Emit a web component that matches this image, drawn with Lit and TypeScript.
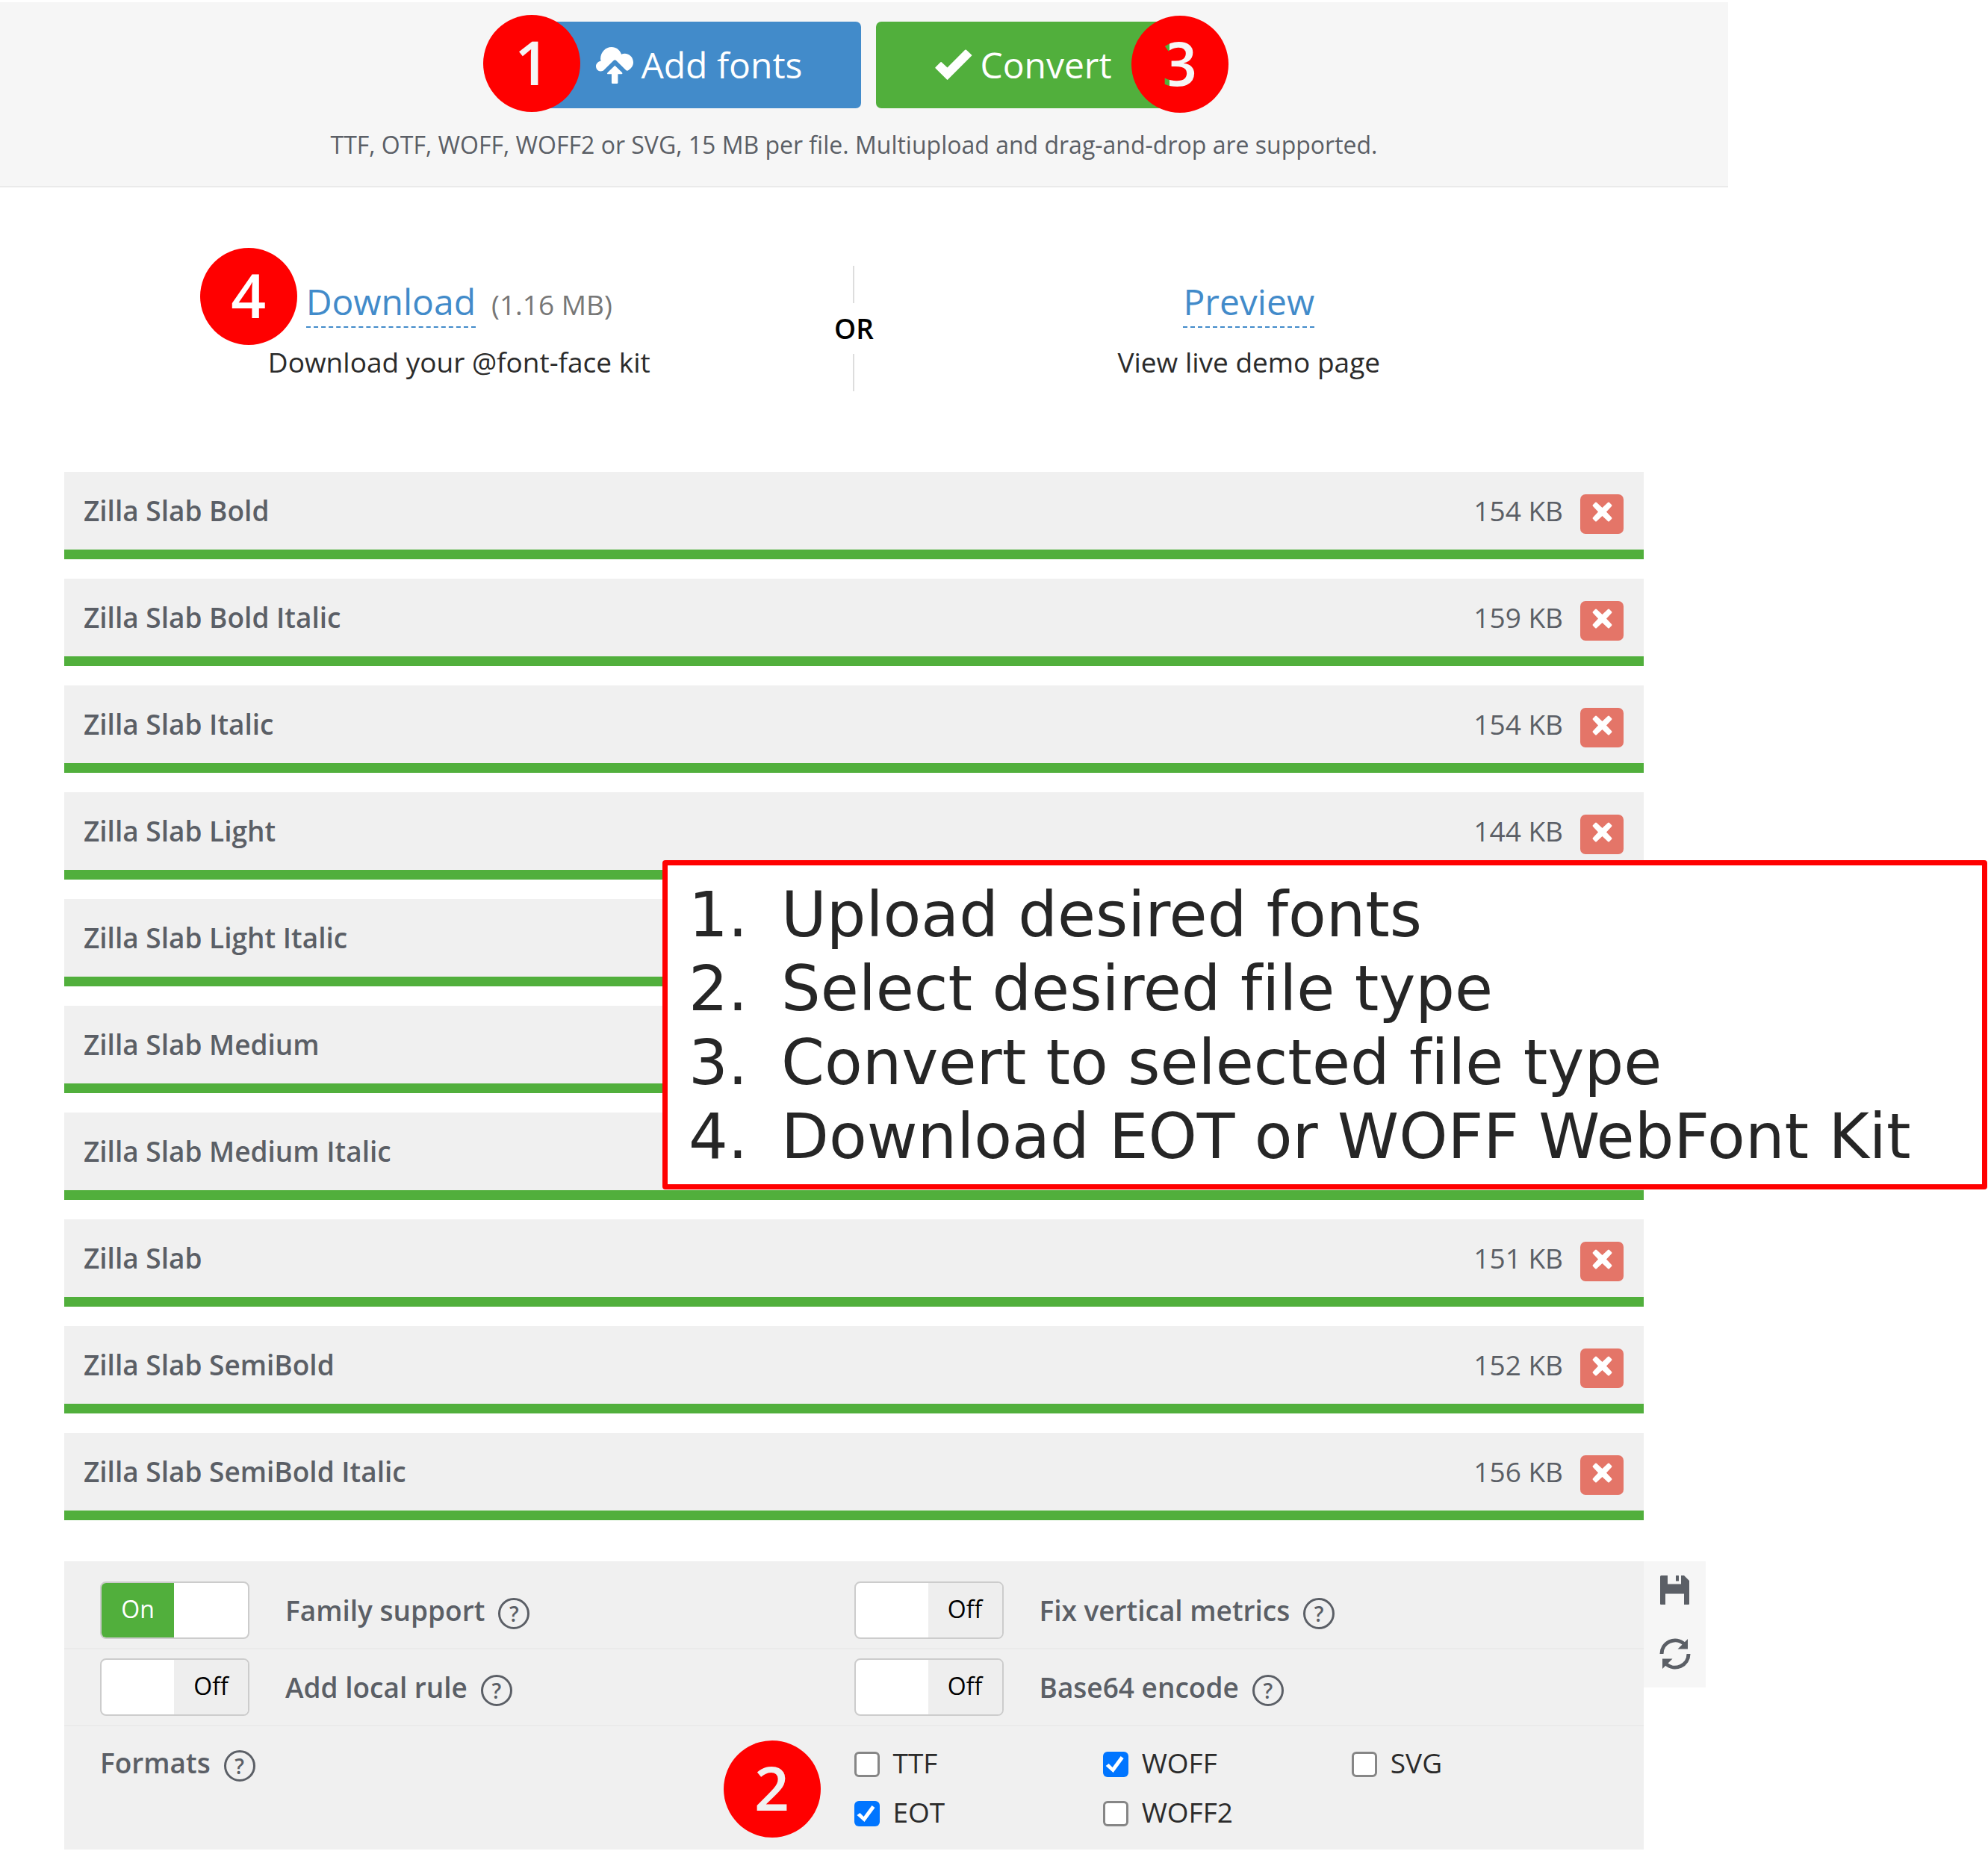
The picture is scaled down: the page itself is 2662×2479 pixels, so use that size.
import { LitElement, html, css, svg } from "lit";
import { customElement, property } from "lit/decorators.js";
import { classMap } from "lit/directives/class-map.js";

interface FontFile {
  name: string;
  size: string;
}

interface FormatChoice {
  name: string;
  checked: boolean;
}

const FILES: FontFile[] = [
  { name: "Zilla Slab Bold", size: "154 KB" },
  { name: "Zilla Slab Bold Italic", size: "159 KB" },
  { name: "Zilla Slab Italic", size: "154 KB" },
  { name: "Zilla Slab Light", size: "144 KB" },
  { name: "Zilla Slab Light Italic", size: "" },
  { name: "Zilla Slab Medium", size: "" },
  { name: "Zilla Slab Medium Italic", size: "" },
  { name: "Zilla Slab", size: "151 KB" },
  { name: "Zilla Slab SemiBold", size: "152 KB" },
  { name: "Zilla Slab SemiBold Italic", size: "156 KB" },
];

const FORMATS: FormatChoice[] = [
  { name: "TTF", checked: false },
  { name: "WOFF", checked: true },
  { name: "SVG", checked: false },
  { name: "EOT", checked: true },
  { name: "WOFF2", checked: false },
];

const STEPS = [
  "Upload desired fonts",
  "Select desired file type",
  "Convert to selected file type",
  "Download EOT or WOFF WebFont Kit",
];

const uploadIcon = html`<svg width="50" height="49" viewBox="0 0 148 145" fill="currentColor" aria-hidden="true">
  ${svg`<path d="M31 92 70 53Q75 49 80 53L119 92Q124 96 129 92C140 85 148 75 148 61 148 41 133 26 114 26 109 26 105 27 101 29 94 10 80 0 62 0 38 0 19 20 18 45 18 50 19 52 20 55 8 58 0 66 0 76 0 87 8 96 19 96 24 96 28 95 31 92Z"/>
  <path d="M75 73 104 101Q107 107 102 107H87V141Q87 145 83 145H66Q62 145 62 141V107H46Q42 105 46 101Z"/>`}
</svg>`;

const checkIcon = html`<svg width="50" height="42" viewBox="0 0 148 124" fill="currentColor" aria-hidden="true">
  ${svg`<path d="M2 71 22 51Q24 49 26 51L49 72 119 2Q122 0 124 2L145 22Q147 24 145 26L51 120Q49 122 47 120L2 75Q0 73 2 71Z"/>`}
</svg>`;

const crossIcon = html`<svg width="27" height="27" viewBox="0 0 27 27" fill="currentColor" aria-hidden="true">
  ${svg`<path d="M6 1 13.500 8 21 1Q22 0 23 1L26 4Q27 5 26 6L19 13.500 26 21Q27 22 26 23L23 26Q22 27 21 26L13.500 19 6 26Q5 27 4 26L1 23Q0 22 1 21L8 13.500 1 6Q0 5 1 4L4 1Q5 0 6 1Z"/>`}
</svg>`;

const saveIcon = html`<svg width="42" height="42" viewBox="0 0 42 42" fill="currentColor" aria-hidden="true">
  ${svg`<path d="M2.500 1H11V12.500H29V1H33L40 8V39Q40 40 39 40H33V25.500H8V40H2Q1 40 1 39V2.500Q1 1 2.500 1Z"/>
  <rect x="22" y="1" width="4" height="7.500" rx=".5"/>`}
</svg>`;

const refreshIcon = html`<svg width="42" height="42" viewBox="0 0 42 42" aria-hidden="true">
  ${svg`<g fill="none" stroke="currentColor" stroke-width="5">
    <path d="M3 21A18 18 0 0 1 33 7.500"/>
    <path d="M39 21A18 18 0 0 1 9 34.500"/>
  </g>
  <path fill="currentColor" d="M38 1V14.500H24.500ZM4 41V27.500H17.500Z"/>`}
</svg>`;

@customElement("step-badge")
export class StepBadge extends LitElement {
  static styles = css`
    :host {
      position: absolute;
      z-index: 1;
      display: flex;
      align-items: center;
      justify-content: center;
      box-sizing: border-box;
      width: 130px;
      height: 130px;
      padding-bottom: 6px;
      border-radius: 50%;
      background: #f00;
      color: #f5f5f5;
      font: 600 82px/82px "Open Sans", sans-serif;
      pointer-events: none;
    }
  `;

  render() {
    return html`<slot></slot>`;
  }
}

@customElement("toggle-option")
export class ToggleOption extends LitElement {
  @property() label = "";
  @property({ type: Boolean }) on = false;

  static styles = css`
    :host {
      display: flex;
      align-items: center;
      gap: 18px;
    }
    .option {
      position: relative;
      display: flex;
      align-items: center;
      gap: 48px;
      cursor: pointer;
    }
    .input {
      position: absolute;
      opacity: 0;
      margin: 0;
      width: 200px;
      height: 77px;
    }
    .track {
      display: grid;
      grid-template-columns: 97px 1fr;
      box-sizing: border-box;
      width: 200px;
      height: 77px;
      border: 2px solid #ccc;
      border-radius: 8px;
      overflow: hidden;
      background: #fff;
      font-size: 32px;
      line-height: 70px;
      text-align: center;
    }
    .on {
      background: #51af3c;
      color: #fff;
    }
    .off {
      grid-column: 2;
      background: #eee;
      color: #000;
    }
    .text {
      font-weight: 600;
      line-height: 50px;
    }
  `;

  render() {
    return html`
      <label class="option">
        <input class="input" type="checkbox" role="switch" .checked=${this.on}
          @change=${(e: Event) => (this.on = (e.target as HTMLInputElement).checked)} />
        <span class="track">
          <span class=${classMap({ on: this.on, off: !this.on })}>${this.on ? "On" : "Off"}</span>
        </span>
        <span class="text">${this.label}</span>
      </label>
      <help-button topic=${this.label}></help-button>
    `;
  }
}

@customElement("help-button")
export class HelpButton extends LitElement {
  @property() topic = "";

  static styles = css`
    :host {
      display: block;
      padding-top: 8px;
    }
    .help {
      display: block;
      box-sizing: border-box;
      width: 42px;
      height: 42px;
      padding: 0;
      border: 3px solid #5b5f66;
      border-radius: 50%;
      background: none;
      color: #5b5f66;
      font: 600 28px/36px "Open Sans", sans-serif;
      text-align: center;
      cursor: pointer;
    }
  `;

  render() {
    return html`<button class="help" type="button" aria-label=${`Help: ${this.topic}`}>?</button>`;
  }
}

@customElement("app-root")
export class AppRoot extends LitElement {
  static styles = css`
    :host {
      display: block;
      overflow: hidden;
      background: #fff;
      color: #2b2b2b;
      font: 37px/50px "Open Sans", sans-serif;
    }
    .sheet {
      margin-right: 348px;
      padding-top: 3px;
    }

    /* Upload bar */
    .bar {
      display: flex;
      flex-direction: column;
      align-items: center;
      gap: 27px;
      padding: 26px 27px 33px 0;
      border-bottom: 2px solid #eaeaea;
      background: #f6f6f6;
    }
    .actions {
      display: flex;
      gap: 20px;
    }
    .action {
      position: relative;
    }
    .button {
      display: flex;
      align-items: center;
      gap: 10px;
      padding: 25px 79px;
      border: 0;
      border-radius: 7px;
      color: #fff;
      font: 48px/66px "Open Sans", sans-serif;
      cursor: pointer;
    }
    .upload {
      background: #428bca;
    }
    .convert {
      background: #51af3c;
    }
    .hint {
      margin: 0;
      color: #5b5f66;
      font-size: 32px;
      line-height: 44px;
    }

    /* Circled step numbers */
    .badge-upload {
      left: -72px;
      top: -9px;
    }
    .badge-convert {
      right: -77px;
      top: -8px;
    }
    .badge-download {
      left: -142px;
      top: -39px;
      color: #fff;
    }
    .badge-formats {
      left: -175px;
      top: -5px;
      color: #f0f0f0;
    }
    /* The digit shows what lies behind the badge: the button's edge, then the bar */
    .see-through {
      background: linear-gradient(to right, #51af3c 10px, #f6f6f6 10px);
      background-clip: text;
      color: transparent;
    }

    .content {
      margin: 105px 113px 0 86px;
    }

    /* Download or preview */
    .results {
      display: grid;
      grid-template-columns: 1fr 1fr;
    }
    .result {
      grid-row: 1;
      grid-column: 1;
      display: flex;
      flex-direction: column;
      align-items: center;
      gap: 21px;
      padding-top: 15px;
    }
    .preview {
      grid-column: 2;
    }
    .result-head {
      position: relative;
      display: flex;
      align-items: baseline;
      gap: 21px;
    }
    .link {
      border-bottom: 2px dashed #428bca;
      color: #428bca;
      font-size: 48px;
      line-height: 66px;
      text-decoration: none;
    }
    .weight {
      color: #777;
    }
    .note {
      margin: 0;
    }
    .divider {
      grid-area: 1 / 1 / 2 / 3;
      justify-self: center;
      display: flex;
      flex-direction: column;
      align-items: center;
      gap: 9px;
      color: #000;
      font-weight: 600;
    }
    .divider::before,
    .divider::after {
      content: "";
      width: 2px;
      height: 50px;
      background: #ddd;
    }

    /* Uploaded files */
    .files {
      position: relative;
      margin-top: 108px;
    }
    .list {
      display: grid;
      gap: 26px;
      margin: 0;
      padding: 0;
      list-style: none;
    }
    .file {
      display: flex;
      align-items: flex-start;
      gap: 23px;
      padding: 27px 27px 21px 26px;
      border-bottom: 13px solid #51af3c;
      background: #f0f0f0;
      color: #5b5f66;
    }
    .name {
      flex: 1;
      font-weight: 600;
    }
    .remove {
      display: flex;
      justify-content: center;
      width: 58px;
      height: 53px;
      margin-top: 3px;
      padding: 10px 0 0;
      border: 0;
      border-radius: 7px;
      background: #e47568;
      color: #fff;
      cursor: pointer;
    }

    /* Instructions laid over the list */
    .callout {
      position: absolute;
      top: 520px;
      left: 801px;
      right: -460px;
      z-index: 2;
      margin: 0;
      padding: 17px 28px 14px;
      border: 7px solid #f00;
      border-radius: 4px;
      background: #fff;
      color: #262626;
      font: 83px/99px "DejaVu Sans", sans-serif;
      font-variant-ligatures: none;
      list-style: none;
    }
    .step {
      display: grid;
      grid-template-columns: 124px 1fr;
      white-space: nowrap;
    }

    /* Conversion settings */
    .settings {
      display: grid;
      grid-template-columns: 1fr 83px;
      align-items: start;
      margin: 55px -83px 0 0;
      color: #5b5f66;
    }
    .panel {
      background: #f0f0f0;
    }
    .options {
      display: grid;
      grid-template-columns: 1fr 1fr;
      padding: 12px 0;
      border-bottom: 2px solid #eaeaea;
    }
    .options:first-child {
      padding-top: 27px;
    }
    .left {
      padding-left: 48px;
    }
    .formats {
      display: grid;
      grid-template-columns: 1fr 1fr;
      align-items: start;
      padding: 24px 0 25px;
    }
    .formats-title {
      display: flex;
      align-items: center;
      gap: 18px;
      font-weight: 600;
    }
    .choices {
      position: relative;
      display: grid;
      grid-template-columns: repeat(3, 1fr);
      row-gap: 16px;
      padding-right: 58px;
      color: #2b2b2b;
    }
    .choice {
      display: flex;
      align-items: center;
      gap: 18px;
      cursor: pointer;
    }
    .box {
      appearance: none;
      box-sizing: border-box;
      width: 34px;
      height: 34px;
      margin: 4px 0 0;
      border: 3px solid #868686;
      border-radius: 6px;
      background: #fff;
    }
    .box:checked {
      border: 0;
      background: #0075ff;
    }
    .box:checked::before {
      content: "";
      display: block;
      height: 34px;
      background: #fff;
      clip-path: polygon(4px 19px, 8px 16px, 13px 21px, 24px 6px, 28px 9px, 14px 28px);
    }
    .tools {
      display: flex;
      flex-direction: column;
      align-items: center;
      gap: 43px;
      padding: 18px 0 24px;
      background: #f6f6f6;
    }
    .tool {
      display: flex;
      padding: 0;
      border: 0;
      background: none;
      color: #5b5f66;
      cursor: pointer;
    }
  `;

  private renderFile(file: FontFile) {
    return html`
      <li class="file">
        <span class="name">${file.name}</span>
        <span>${file.size}</span>
        <button class="remove" type="button" aria-label=${`Remove ${file.name}`}>${crossIcon}</button>
      </li>
    `;
  }

  render() {
    return html`
      <div class="sheet">
        <header class="bar">
          <div class="actions">
            <div class="action">
              <button class="button upload" type="button">${uploadIcon}Add fonts</button>
              <step-badge class="badge-upload">1</step-badge>
            </div>
            <div class="action">
              <button class="button convert" type="button">${checkIcon}Convert</button>
              <step-badge class="badge-convert"><span class="see-through">3</span></step-badge>
            </div>
          </div>
          <p class="hint">
            TTF, OTF, WOFF, WOFF2 or SVG, 15 MB per file. Multiupload and drag-and-drop are supported.
          </p>
        </header>

        <main class="content">
          <section class="results">
            <div class="result">
              <div class="result-head">
                <step-badge class="badge-download">4</step-badge>
                <a class="link" href="#download">Download</a>
                <span class="weight">(1.16 MB)</span>
              </div>
              <p class="note">Download your @font-face kit</p>
            </div>
            <div class="divider">OR</div>
            <div class="result preview">
              <div class="result-head"><a class="link" href="#preview">Preview</a></div>
              <p class="note">View live demo page</p>
            </div>
          </section>

          <section class="files">
            <ul class="list">
              ${FILES.map((file) => this.renderFile(file))}
            </ul>
            <ol class="callout">
              ${STEPS.map((step, i) => html`<li class="step"><span>${i + 1}.</span><span>${step}</span></li>`)}
            </ol>
          </section>

          <section class="settings">
            <div class="panel">
              <div class="options">
                <toggle-option class="left" label="Family support" on></toggle-option>
                <toggle-option label="Fix vertical metrics"></toggle-option>
              </div>
              <div class="options">
                <toggle-option class="left" label="Add local rule"></toggle-option>
                <toggle-option label="Base64 encode"></toggle-option>
              </div>
              <div class="formats">
                <div class="formats-title left">
                  <span id="formats-title">Formats</span>
                  <help-button topic="Formats"></help-button>
                </div>
                <div class="choices" role="group" aria-labelledby="formats-title">
                  <step-badge class="badge-formats">2</step-badge>
                  ${FORMATS.map(
                    (format) => html`
                      <label class="choice">
                        <input class="box" type="checkbox" .checked=${format.checked} />
                        <span>${format.name}</span>
                      </label>
                    `,
                  )}
                </div>
              </div>
            </div>
            <div class="tools">
              <button class="tool" type="button" aria-label="Save settings">${saveIcon}</button>
              <button class="tool" type="button" aria-label="Reset settings">${refreshIcon}</button>
            </div>
          </section>
        </main>
      </div>
    `;
  }
}
